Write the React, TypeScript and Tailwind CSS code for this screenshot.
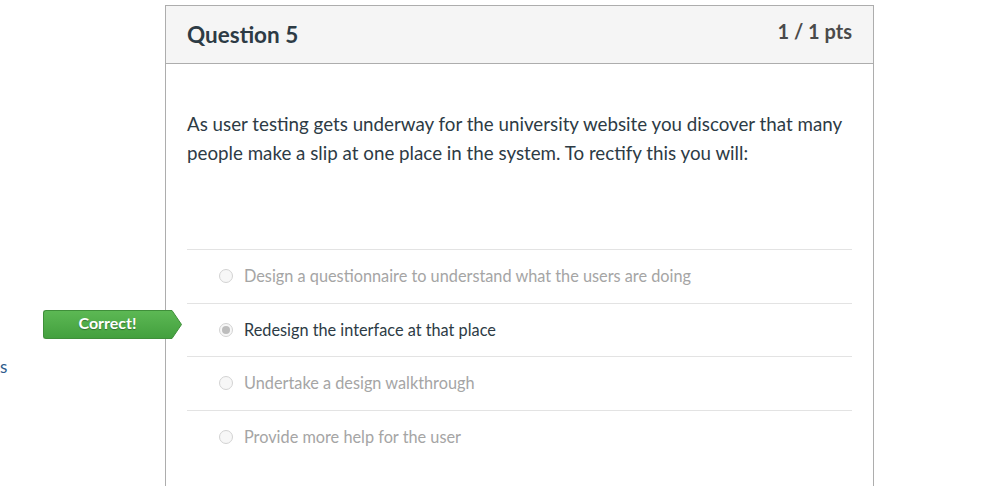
import React from "react";

const answers = [
  { text: "Design a questionnaire to understand what the users are doing", selected: false },
  { text: "Redesign the interface at that place", selected: true },
  { text: "Undertake a design walkthrough", selected: false },
  { text: "Provide more help for the user", selected: false },
];

function Radio({ selected }: { selected: boolean }) {
  return (
    <span className="flex h-[14px] w-[14px] items-center justify-center rounded-full border border-[#d3d3d3] bg-[#f7f7f7]">
      {selected && <span className="h-[8px] w-[8px] rounded-full bg-[#bdbdbd]" />}
    </span>
  );
}

export default function App() {
  return (
    <div
      className="flex h-[486px] w-[994px] overflow-hidden bg-white"
      style={{ fontFamily: "Lato, 'Open Sans', sans-serif" }}
    >
      <div className="w-[165px] shrink-0 pt-[355px]">
        <span className="text-[17px] leading-[22px] text-[#2d5b8c]">s</span>
      </div>
      <div className="mt-[5px] flex h-[500px] w-[709px] shrink-0 flex-col border border-[#adadad]">
        <div className="flex h-[58px] items-start justify-between border-b border-[#adadad] bg-[#f5f5f5] pl-[21px] pr-[21px]">
          <div className="pt-[14px] text-[22.5px] font-bold leading-[30px] text-[#2d3b45]">Question 5</div>
          <div className="pt-[12px] text-[20px] font-bold leading-[26px] text-[#4a4a4a]">1 / 1 pts</div>
        </div>
        <div className="px-[21px]">
          <p className="pt-[45px] text-[18.75px] leading-[29px] text-[#2d3b45]">
            As user testing gets underway for the university website you discover that many people make a slip at one
            place in the system. To rectify this you will:
          </p>
          <div className="mt-[82px] border-t border-[#e3e3e3]">
            {answers.map((a, i) => (
              <div
                key={i}
                className={`relative flex h-[53.5px] items-center gap-[11px] pl-[32px] ${i < answers.length - 1 ? "border-b border-[#e3e3e3]" : ""}`}
              >
                {a.selected && (
                  <div className="absolute left-[-144px] top-[6px] flex h-[29px] items-center">
                    <div className="flex h-[29px] w-[128px] items-center justify-center rounded-l-[3px] border border-r-0 border-[#3f8f3a] bg-gradient-to-b from-[#5cb854] to-[#43a03e] pb-[2px] text-[16px] font-bold text-white [text-shadow:0_1px_1px_rgba(0,0,0,0.35)]">
                      Correct!
                    </div>
                    <svg width="12" height="29" viewBox="0 0 12 29" className="-ml-px">
                      <defs>
                        <linearGradient id="g" x1="0" y1="0" x2="0" y2="1">
                          <stop offset="0" stopColor="#5cb854" />
                          <stop offset="1" stopColor="#43a03e" />
                        </linearGradient>
                      </defs>
                      <path d="M0 0.5 L2 0.5 L11.5 14.5 L2 28.5 L0 28.5 Z" fill="url(#g)" />
                      <path d="M0 0.5 L2 0.5 L11.5 14.5 L2 28.5 L0 28.5" fill="none" stroke="#3f8f3a" strokeWidth="1" />
                    </svg>
                  </div>
                )}
                <Radio selected={a.selected} />
                <span className={`text-[16.3px] leading-[20px] ${a.selected ? "text-[#2d3b45]" : "text-[#a5a5a5]"}`}>
                  {a.text}
                </span>
              </div>
            ))}
          </div>
        </div>
      </div>
    </div>
  );
}
